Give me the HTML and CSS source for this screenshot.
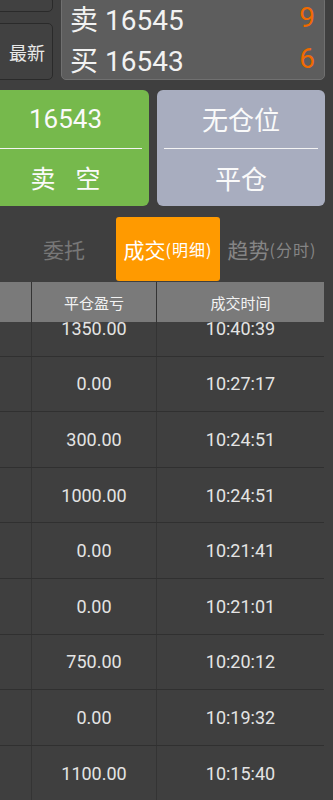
FILE: index.html
```html
<!DOCTYPE html>
<html lang="zh">
<head>
  <meta charset="UTF-8" />
  <meta name="viewport" content="width=device-width, initial-scale=1.0" />
  <title>成交明细</title>
  <link rel="stylesheet" href="styles.css">
</head>
<body>
  <div class="page">
    <div class="quote">
      <div class="side">
        <div class="side-btn side-btn-top"></div>
        <div class="side-btn">最新</div>
      </div>
      <div class="book">
        <div class="book-row"><span class="book-label">卖 16545</span><span class="book-vol">9</span></div>
        <div class="book-row"><span class="book-label">买 16543</span><span class="book-vol">6</span></div>
      </div>
    </div>

    <div class="actions">
      <div class="act act-sell">
        <div class="act-half">16543</div>
        <div class="act-line"></div>
        <div class="act-half act-spread"><span>卖</span><span>空</span></div>
      </div>
      <div class="act act-close">
        <div class="act-half">无仓位</div>
        <div class="act-line"></div>
        <div class="act-half">平仓</div>
      </div>
    </div>

    <div class="tabs">
      <div class="tab tab-dim">委托</div>
      <div class="tab tab-active">成交<small>(明细)</small></div>
      <div class="tab tab-dim2">趋势<small>(分时)</small></div>
    </div>

    <div class="grid">
      <div class="grid-row grid-head">
        <div class="cell c1"></div>
        <div class="cell c2">平仓盈亏</div>
        <div class="cell c3">成交时间</div>
      </div>
      <div class="grid-body">
        <div class="grid-list">
          <div class="grid-row"><div class="cell c1"></div><div class="cell c2">1350.00</div><div class="cell c3">10:40:39</div></div>
          <div class="grid-row"><div class="cell c1"></div><div class="cell c2">0.00</div><div class="cell c3">10:27:17</div></div>
          <div class="grid-row"><div class="cell c1"></div><div class="cell c2">300.00</div><div class="cell c3">10:24:51</div></div>
          <div class="grid-row"><div class="cell c1"></div><div class="cell c2">1000.00</div><div class="cell c3">10:24:51</div></div>
          <div class="grid-row"><div class="cell c1"></div><div class="cell c2">0.00</div><div class="cell c3">10:21:41</div></div>
          <div class="grid-row"><div class="cell c1"></div><div class="cell c2">0.00</div><div class="cell c3">10:21:01</div></div>
          <div class="grid-row"><div class="cell c1"></div><div class="cell c2">750.00</div><div class="cell c3">10:20:12</div></div>
          <div class="grid-row"><div class="cell c1"></div><div class="cell c2">0.00</div><div class="cell c3">10:19:32</div></div>
          <div class="grid-row"><div class="cell c1"></div><div class="cell c2">1100.00</div><div class="cell c3">10:15:40</div></div>
        </div>
      </div>
    </div>
  </div>
</body>
</html>
```
FILE: styles.css
```css
html, body {
  margin: 0;
  padding: 0;
  height: 800px;
  overflow: hidden;
  background: #3f3f3f;
  font-family: Roboto, "Noto Sans CJK SC", sans-serif;
  color: #f0f0f0;
}

.page {
  width: 335px;
  margin-left: -10px;
  margin-top: -4px;
}

/* bagian atas: harga */
.quote {
  display: flex;
  gap: 8px;
  height: 84px;
}

.side {
  width: 63px;
  display: flex;
  flex-direction: column;
  gap: 11px;
}

.side-btn {
  flex: 1;
  box-sizing: border-box;
  display: flex;
  align-items: center;
  justify-content: flex-end;
  padding-right: 7px;
  background: #414141;
  border: 1px solid #2a2a2a;
  border-radius: 5px;
  font-size: 18px;
  color: #e8e8e8;
}

.side-btn-top {
  flex: 0 0 16px;
}

.book {
  flex: 1;
  box-sizing: border-box;
  padding: 0 9px 0 8px;
  background: #5d5d5d;
  border: 1px solid #707070;
  border-radius: 5px;
}

.book-row {
  height: 41px;
  display: flex;
  align-items: center;
  justify-content: space-between;
  font-size: 28px;
}

.book-label {
  color: #f2f2f2;
}

.book-vol {
  color: #f06a00;
}

/* tombol */
.actions {
  display: flex;
  gap: 8px;
  height: 116px;
  margin-top: 10px;
}

.act {
  display: flex;
  flex-direction: column;
  border-radius: 6px;
  font-size: 26px;
  color: #fafafa;
}

.act-sell {
  width: 159px;
  background: #76b94c;
}

.act-close {
  flex: 1;
  background: #a8adbf;
}

.act-half {
  flex: 1;
  display: flex;
  align-items: center;
  justify-content: center;
}

.act-sell .act-half {
  padding-right: 8px;
}

.act-spread {
  gap: 20px;
  font-size: 25px;
}

.act-line {
  height: 1px;
  margin: 0 7px;
  background: #f4f4f4;
}

/* tab */
.tabs {
  display: flex;
  padding-left: 22px;
  margin-top: 11px;
  height: 64px;
}

.tab {
  width: 104px;
  display: flex;
  align-items: center;
  justify-content: center;
  font-size: 21px;
  font-family: "Noto Sans CJK SC", sans-serif;
}

.tab small {
  font-size: 16px;
  letter-spacing: 1px;
}

.tab-dim {
  color: #777777;
}

.tab-dim2 {
  color: #858585;
}

.tab-active {
  background: #ff9a00;
  border-radius: 3px;
  color: #ffffff;
}

/* tabel */
.grid {
  margin-top: 1px;
  width: 334px;
}

.grid-row {
  display: flex;
  box-sizing: border-box;
  height: 55.6px;
  border-bottom: 1px solid #303030;
}

.grid-head {
  height: 40px;
  background: #7a7a7a;
  border-bottom: none;
  font-size: 15px;
  font-family: "Noto Sans CJK SC", sans-serif;
  color: #f2f2f2;
  position: relative;
  z-index: 1;
}

.cell {
  display: flex;
  align-items: center;
  justify-content: center;
  box-sizing: border-box;
}

.c1 {
  width: 42px;
  border-right: 1px solid #343434;
}

.c2 {
  width: 125px;
  border-right: 1px solid #343434;
}

.c3 {
  flex: 1;
}

.grid-body {
  height: 478px;
  overflow: hidden;
}

.grid-list {
  margin-top: -21px;
  font-size: 18px;
  color: #e4e4e4;
}
```
